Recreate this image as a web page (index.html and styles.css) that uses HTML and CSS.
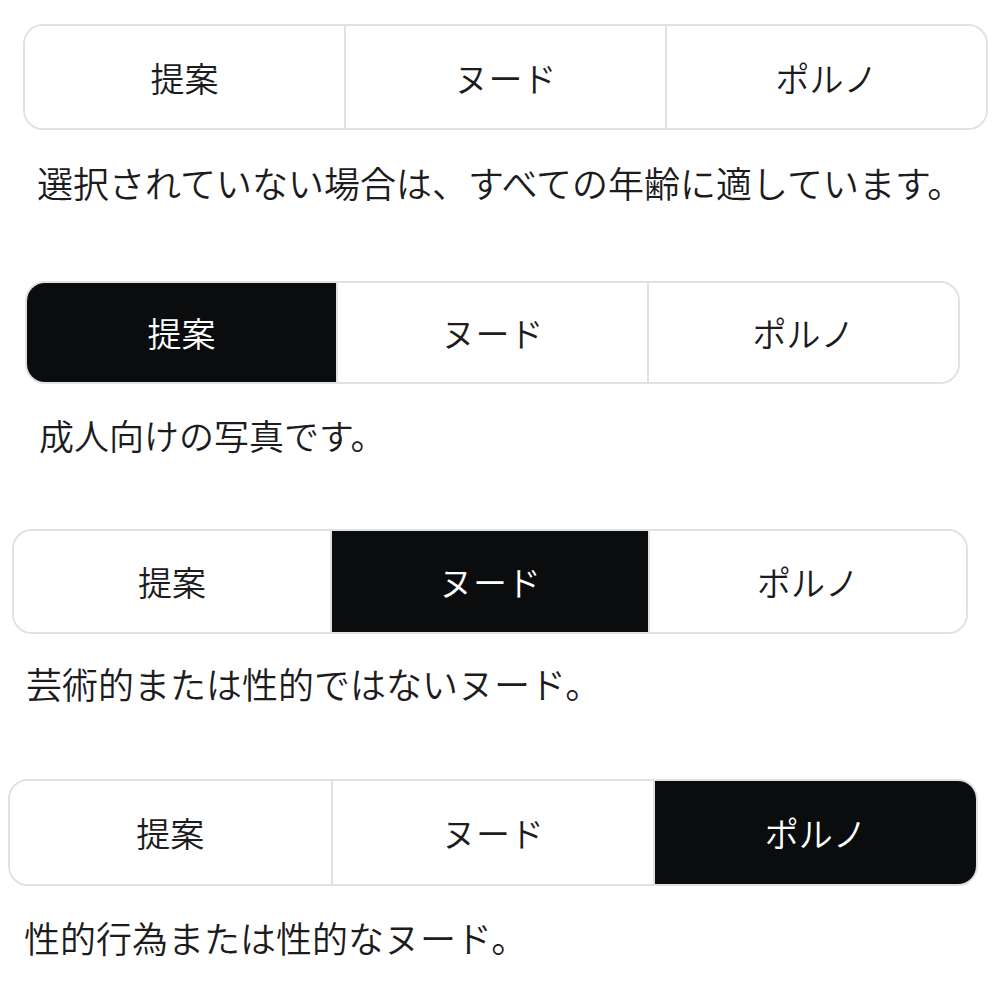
FILE: index.html
```html
<!DOCTYPE html>
<html lang="ja">
<head>
    <meta charset="UTF-8">
    <meta name="viewport" content="width=device-width, initial-scale=1.0">
    <title>コンテンツ評価</title>
    <link rel="stylesheet" href="styles.css">
</head>
<body>
    <div class="rating rating-none">
        <div class="segments">
            <div class="segment">提案</div>
            <div class="segment">ヌード</div>
            <div class="segment">ポルノ</div>
        </div>
        <p class="caption">選択されていない場合は、すべての年齢に適しています。</p>
    </div>

    <div class="rating rating-suggestive">
        <div class="segments">
            <div class="segment selected">提案</div>
            <div class="segment">ヌード</div>
            <div class="segment">ポルノ</div>
        </div>
        <p class="caption">成人向けの写真です。</p>
    </div>

    <div class="rating rating-nude">
        <div class="segments">
            <div class="segment">提案</div>
            <div class="segment selected">ヌード</div>
            <div class="segment">ポルノ</div>
        </div>
        <p class="caption">芸術的または性的ではないヌード。</p>
    </div>

    <div class="rating rating-porn">
        <div class="segments">
            <div class="segment">提案</div>
            <div class="segment">ヌード</div>
            <div class="segment selected">ポルノ</div>
        </div>
        <p class="caption">性的行為または性的なヌード。</p>
    </div>
</body>
</html>
```

FILE: styles.css
```css
body {
    font-family: "Noto Sans CJK JP", "Noto Sans", sans-serif;
    font-weight: 350;
    margin: 0;
    padding: 0;
    background-color: #fff;
    color: #1c1c1e;
}
.segments {
    display: flex;
    border: 2px solid #dfe2e5;
    border-radius: 20px;
    overflow: hidden;
    box-sizing: border-box;
}
.segment {
    flex: 1;
    display: flex;
    align-items: center;
    justify-content: center;
    font-size: 34px;
    background-color: #fff;
}
.segment + .segment {
    border-left: 2px solid #dfe2e5;
}
.segment.selected {
    background-color: #0a0c0e;
    color: #fff;
}
.caption {
    margin: 31px 0 0 14px;
    font-size: 35px;
    line-height: 40px;
}

/* each block comes from its own screenshot, so sizes differ a little */
.rating-none {
    padding-top: 24px;
    margin-left: 23px;
    width: 965px;
}
.rating-none .segments {
    height: 106px;
}
.rating-none .caption {
    margin-top: 32px;
    font-size: 36px;
}
.rating-suggestive {
    padding-top: 79px;
    margin-left: 25px;
    width: 935px;
}
.rating-suggestive .segments {
    height: 103px;
}
.rating-nude {
    padding-top: 74px;
    margin-left: 12px;
    width: 956px;
}
.rating-nude .segments {
    height: 105px;
}
.rating-nude .caption {
    margin-top: 29px;
    font-size: 36px;
}
.rating-porn {
    padding-top: 76px;
    margin-left: 8px;
    width: 970px;
}
.rating-porn .segments {
    height: 107px;
}
.rating-porn .caption {
    margin-left: 16px;
    font-size: 36px;
}
```
